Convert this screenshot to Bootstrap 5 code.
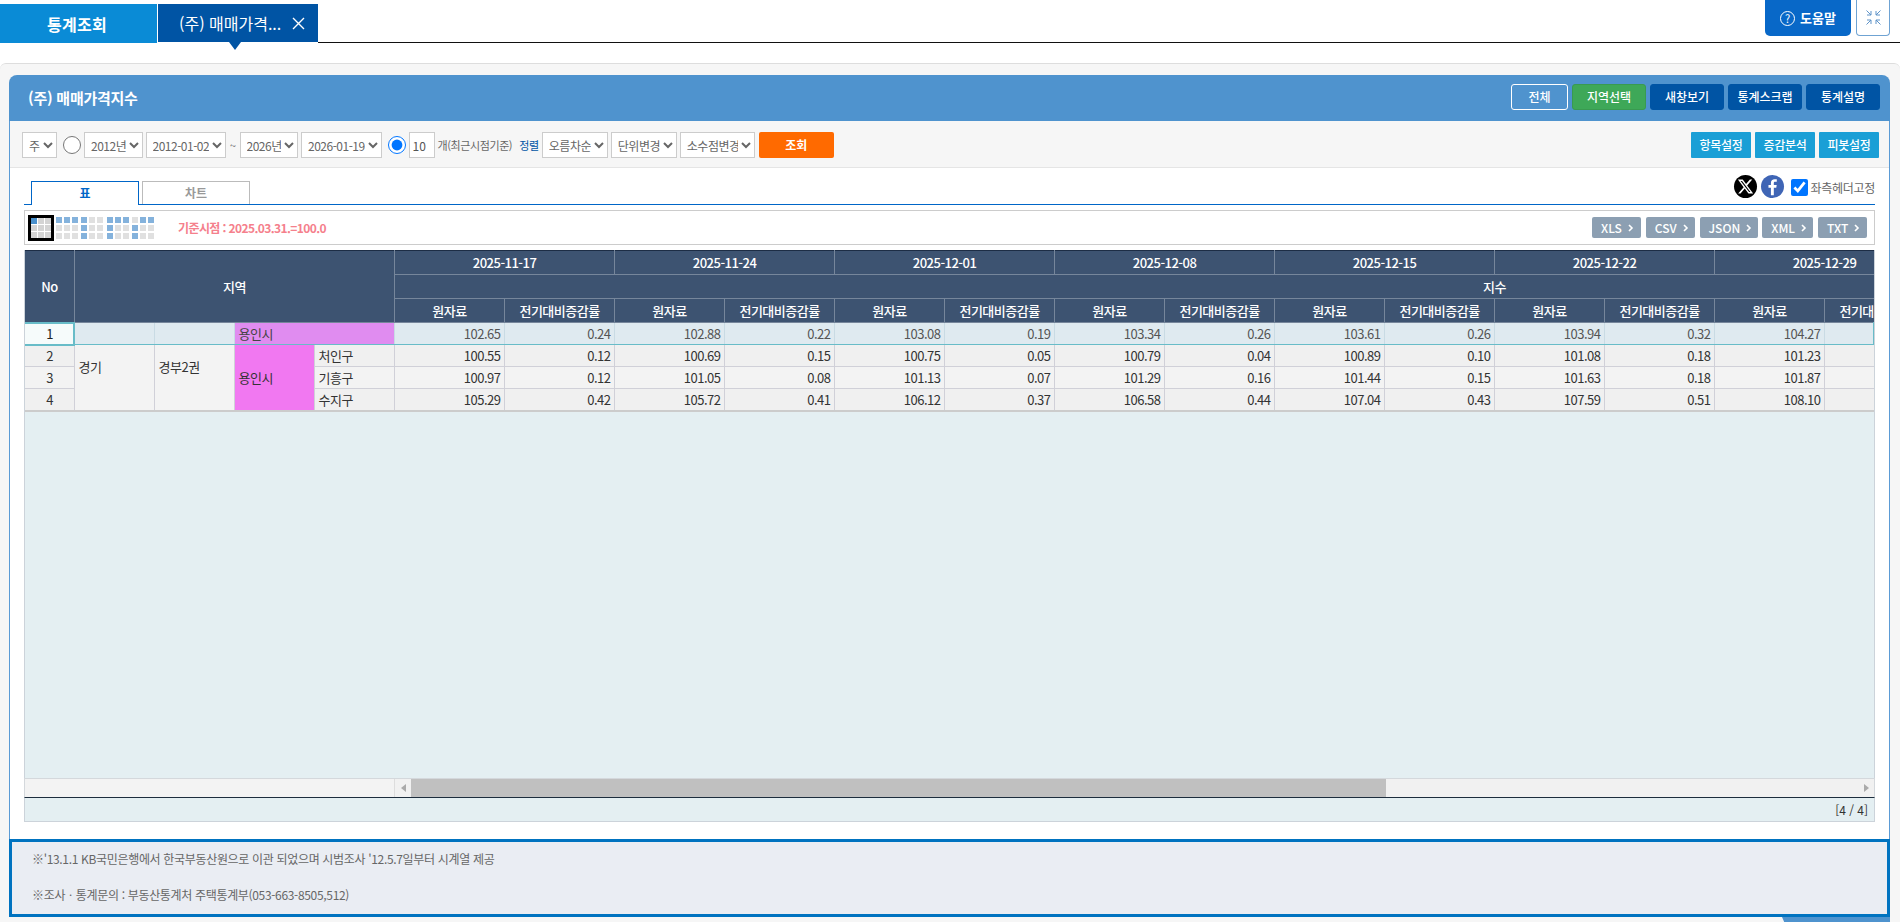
<!DOCTYPE html>
<html lang="ko">
<head>
<meta charset="utf-8">
<title>(주) 매매가격지수</title>
<link rel="stylesheet" href="https://cdn.jsdelivr.net/npm/bootstrap@5.3.0/dist/css/bootstrap.min.css">
<style>
html,body{height:922px;overflow:hidden;}
body{font-family:"Noto Sans CJK KR","Liberation Sans",sans-serif;font-size:12px;color:#333;background:#fff;}
.topwrap{height:63px;}
.tabmain{width:157px;height:39px;margin-top:4px;background:#0a8bd6;color:#fff;font-size:16px;font-weight:700;letter-spacing:.3px;padding-right:3px;}
.tabcur{width:160px;height:38px;margin-top:4px;margin-left:1px;background:#0054a4;color:#fff;font-size:16px;padding-left:21px;gap:11px;position:relative;}
.tabcur::after{content:"";position:absolute;left:71px;top:38px;border-style:solid;border-width:8px 6px 0;border-color:#0054a4 transparent transparent;}
.topline{height:43px;border-bottom:1px solid #111;}
.helpbtn{width:86px;height:36px;background:#0868c8;color:#fff;font-size:13px;font-weight:700;border-radius:0 0 5px 5px;gap:5px;}
.helpq{width:15px;height:15px;border:1px solid #fff;border-radius:50%;font-size:11px;font-weight:400;line-height:13px;text-align:center;}
.sizebtn{width:34px;height:36px;background:#fff;border:1px solid #6fa3d3;border-top:0;border-radius:0 0 4px 4px;margin:0 10px 0 5px;}
.mainwrap{height:859px;background:#f6f6f6;border-top:1px solid #ddd;padding:11px 10px 0 9px;border-radius:6px 6px 0 0;overflow:hidden;}
.panelhead{height:46px;background:#4f93ce;border-radius:8px 8px 0 0;color:#fff;padding:9px 10px 0 19px;}
.paneltitle{font-size:15px;font-weight:700;line-height:1;padding-top:6px;letter-spacing:-.25px;}
.hbtn{height:26px;padding:0;font-size:12px;font-weight:500;line-height:24px;color:#fff;border-radius:3px;border:1px solid #0054a4;background:#0054a4;}
.hbtn:hover{color:#fff;}
.hw-all{width:57px;background:transparent;border-color:#fff;}
.hw-area{width:74px;background:#3ea858;border-color:#399a50;}
.hw-def{width:74px;}
.panelbody{background:#fff;border-left:1px solid #5b9bd5;border-right:1px solid #5b9bd5;}
.toolbar{height:47px;background:#f6f6f6;border-bottom:1px solid #e5e5e5;padding:11px 10px 0 12px;}
.toolrow{gap:3px;height:26px;}
.sel{height:26px;border:1px solid #ccc;background:#fff;color:#666;font-size:12px;letter-spacing:-.5px;font-family:inherit;padding:0 0 0 2px;border-radius:0;}
.w-a{width:35px}.w-b{width:58.5px}.w-c{width:80.5px}.w-d{width:66px}.w-e{width:75px}
.rad{width:18px;height:18px;margin:0 0 0 3px;}
.numbox{width:26px;height:26px;border:1px solid #ccc;background:#fff;color:#555;font-size:12px;padding:0 3px;font-family:inherit;}
.gray11{font-size:11px;color:#666;letter-spacing:-.4px;}
.tilde{width:7.5px;text-align:center;}
.sortlab{color:#0054a4;font-size:11px;letter-spacing:-.3px;margin-left:4px;}
.gobtn{width:75px;height:26px;padding:0;margin-left:1px;background:#ff6a00;border:0;border-radius:2px;color:#fff;font-size:12px;font-weight:700;}
.tbtn{width:60px;height:26px;padding:0;background:#1a9fd6;border:0;border-radius:1px;color:#fff;font-size:12px;font-weight:500;letter-spacing:-.3px;}
.tbtn:hover{color:#fff;}
.tabarea{padding:0 14px;}
.tabbar{height:37px;padding-top:7px;border-bottom:1px solid #0066c8;}
.vtab{width:108px;height:23px;text-align:center;line-height:21px;font-size:12px;font-weight:700;border:1px solid #bbb;border-bottom:0;color:#999;background:#fff;margin-left:3px;}
.vtab-on{color:#0066c8;border-color:#0066c8;margin-left:7px;margin-bottom:-1px;height:24px;}
.roundico{width:23px;height:23px;border-radius:50%;}
.fbico{background:#3f65b5;}
.chk{width:17px;height:17px;margin:4px 3px 0 7px;}
.chklab{font-size:12px;line-height:17px;margin-top:4px;color:#666;letter-spacing:-.3px;}
.toolbox{height:35px;margin-top:5px;background:#fff;border:1px solid #ccc;padding:0 7px 0 3px;}
.gridico{display:grid;grid-template-columns:repeat(3,6px);grid-auto-rows:6px;gap:2px;}
.gridico-on{box-sizing:border-box;border:3px solid #000;width:26px;height:26px;gap:1px;}
.gridico i{display:block;background:#e0e0e0;}
.gridico i.o{background:#84b2dc;}
.gridico-on i{background:#d4d4d4;}
.gridico-on i.o{background:#4a90cc;}
.ml-2px{margin-left:2px}.ml-3px{margin-left:3px}.ml-4px{margin-left:4px}
.basetxt{color:#f5808c;font-weight:700;font-size:12px;margin-left:24px;letter-spacing:-.6px;}
.xbtn{height:21px;padding:0 0 0 9px;background:#8c9fb2;border:0;border-radius:2px;color:#fff;font-size:12px;font-weight:500;line-height:21px;margin-left:4.75px;gap:6px;}
.xbtn:hover{color:#fff;}
.xw-a{width:49px}.xw-b{width:58px}.xw-c{width:51px}
.gridbox{margin-top:5px;height:528px;background:#e4eff2;position:relative;border-left:1px solid #ccd3da;border-right:1px solid #ccd3da;overflow:hidden;}
.gridbox::after{content:"";position:absolute;right:0;top:72px;width:1px;height:23px;background:#68bcc8;}
.gtable.table{width:2570px;table-layout:fixed;border-collapse:collapse;margin:0 0 0 -2px;font-size:13px;letter-spacing:-.5px;line-height:1;}
.gtable.table>:not(caption)>*>*{padding:0 3px 0 4px;height:22px;vertical-align:middle;border:1px solid #d0d0d8;background-color:#f0f0f0;color:#333;box-shadow:none;}
.gtable.table>thead>tr>th{height:24px;background-color:#3d5371;color:#fff;border:1px solid #76869b;text-align:center;font-weight:500;}
.gtable.table>thead>tr:first-child>th{border-top:1px solid #1d2d45;}
.gtable.table>tbody>tr>td.num{text-align:right;}
.gtable.table>tbody>tr>td.ctr{text-align:center;}
.gtable.table>tbody>tr.lite>td{background-color:#f3f3f3;}
.gtable.table>tbody>tr>td.reg{background-color:#f3f3f3;padding-bottom:21px;}
.gtable.table>tbody>tr>td.pk{background-color:#f178f1;}
.gtable.table>tbody>tr.cur>td{background-color:#dfeaf0;color:#555;border-top:1px solid #68bcc8;border-bottom:1px solid #68bcc8;border-left-color:#c9dbe4;border-right-color:#c9dbe4;}
.gtable.table>tbody>tr.cur>td.pk2{background-color:#e08cf0;color:#444;}
.gtable.table>tbody>tr.cur>td.sel1{background-color:#f6fbfb;color:#222;border:2px solid #68bcc8;}
.gtable.table>tbody>tr.last>td{border-bottom:2px solid #ccc;}
.gtable.table>tbody>tr>td.lastr{border-bottom:2px solid #ccc;}
.scrollrow{height:19px;background:#f1f1f1;border:1px solid #d4d8dc;border-width:1px 1px 0;}
.scrolleft{width:370px;background:#f3f3f3;border-right:1px solid #ddd;}
.arrowb{width:16px;}
.thumb{width:975px;height:18px;background:#c0c0c0;}
.statusrow{height:25px;background:#e4eff2;border:1px solid #ccd3da;border-top:1px solid #1d2d3d;padding-right:6px;font-size:12px;color:#333;}
.noticebox{height:78px;margin:17px -1px 0;background:#eaedf3;border:3px solid #0073c0;padding:8px 20px;font-size:12px;color:#666;line-height:18px;letter-spacing:-.33px;}
.noticebox p{margin:0 0 18px;}
.tailbox{margin:0 -1px;background:#f6f6f6;}
.tailpiece{width:108px;height:5px;background:#4f93ce;clip-path:polygon(0 0,100% 0,100% 100%,2% 100%);}
</style>
</head>
<body>
<div class="topwrap d-flex">
  <div class="tabmain d-flex align-items-center justify-content-center">통계조회</div>
  <div class="tabcur d-flex align-items-center"><span>(주) 매매가격...</span>
    <svg width="13" height="13" viewBox="0 0 13 13" fill="none" stroke="#fff" stroke-width="1.4"><path d="M1 1l11 11M12 1L1 12"/></svg>
  </div>
  <div class="topline flex-grow-1"></div>
  <div class="d-flex position-absolute top-0 end-0">
    <div class="helpbtn d-flex align-items-center justify-content-center"><span class="helpq">?</span><span>도움말</span></div>
    <div class="sizebtn d-flex align-items-center justify-content-center">
      <svg width="15" height="15" viewBox="0 0 15 15" fill="none" stroke="#5f93c8" stroke-width="1"><path d="M.5 .5l4.500 4.500M5 1v4H1M14.500 .5L10 5M10 1v4h4M.5 14.500L5 10M1 10h4v4M14.500 14.500L10 10M14 10h-4v4"/></svg>
    </div>
  </div>
</div>
<div class="mainwrap">
  <div class="panelhead d-flex justify-content-between">
    <div class="paneltitle">(주) 매매가격지수</div>
    <div class="d-flex gap-1">
      <button class="btn hbtn hw-all">전체</button>
      <button class="btn hbtn hw-area">지역선택</button>
      <button class="btn hbtn hw-def">새창보기</button>
      <button class="btn hbtn hw-def">통계스크랩</button>
      <button class="btn hbtn hw-def">통계설명</button>
    </div>
  </div>
  <div class="panelbody">
    <div class="toolbar d-flex">
      <div class="toolrow d-flex align-items-center flex-grow-1">
        <select class="sel w-a"><option>주</option></select>
        <input class="rad" type="radio" name="rng" aria-label="기간">
        <select class="sel w-b"><option>2012년</option></select>
        <select class="sel w-c"><option>2012-01-02</option></select>
        <span class="gray11 tilde">~</span>
        <select class="sel w-b"><option>2026년</option></select>
        <select class="sel w-c"><option>2026-01-19</option></select>
        <input class="rad" type="radio" name="rng" checked aria-label="최근시점">
        <input class="numbox" value="10" aria-label="개수">
        <span class="gray11">개(최근시점기준)</span>
        <span class="sortlab">정렬</span>
        <select class="sel w-d"><option>오름차순</option></select>
        <select class="sel w-d"><option>단위변경</option></select>
        <select class="sel w-e"><option>소수점변경</option></select>
        <button class="btn gobtn">조회</button>
      </div>
      <div class="d-flex align-items-start gap-1">
        <button class="btn tbtn">항목설정</button>
        <button class="btn tbtn">증감분석</button>
        <button class="btn tbtn">피봇설정</button>
      </div>
    </div>
    <div class="tabarea">
      <div class="tabbar d-flex justify-content-between">
        <div class="d-flex align-items-end">
          <div class="vtab vtab-on">표</div>
          <div class="vtab">차트</div>
        </div>
        <div class="d-flex align-items-start">
          <div class="roundico bg-black d-flex align-items-center justify-content-center me-1">
            <svg width="17" height="17" viewBox="0 0 24 24" fill="#fff"><path d="M18.244 2.25h3.308l-7.227 8.26 8.502 11.24H16.17l-5.214-6.817L4.99 21.75H1.68l7.73-8.835L1.254 2.25H8.08l4.713 6.231zm-1.161 17.52h1.833L7.084 4.126H5.117z"/></svg>
          </div>
          <div class="roundico fbico d-flex align-items-center justify-content-center">
            <svg width="21" height="21" viewBox="0 0 24 24" fill="#fff"><path d="M13.5 22v-8.5h2.8l.5-3.3h-3.3V8.300c0-1 .3-1.600 1.700-1.600h1.700V3.800c-.4 0-1.400-.1-2.500-.1-2.500 0-4.200 1.500-4.200 4.200v2.300H7.400v3.300h2.800V22z"/></svg>
          </div>
          <input class="chk" type="checkbox" checked aria-label="좌측헤더고정">
          <span class="chklab">좌측헤더고정</span>
        </div>
      </div>
      <div class="toolbox d-flex align-items-center justify-content-between">
        <div class="d-flex align-items-center">
          <div class="gridico gridico-on"><i class="o"></i><i></i><i></i><i></i><i></i><i></i><i></i><i></i><i></i></div>
          <div class="gridico ml-2px"><i class="o"></i><i class="o"></i><i class="o"></i><i></i><i></i><i></i><i></i><i></i><i></i></div>
          <div class="gridico ml-3px"><i class="o"></i><i></i><i></i><i class="o"></i><i></i><i></i><i class="o"></i><i></i><i></i></div>
          <div class="gridico ml-4px"><i class="o"></i><i class="o"></i><i class="o"></i><i class="o"></i><i></i><i></i><i class="o"></i><i></i><i></i></div>
          <div class="gridico ml-3px"><i></i><i class="o"></i><i class="o"></i><i class="o"></i><i></i><i></i><i class="o"></i><i></i><i></i></div>
          <span class="basetxt">기준시점 : 2025.03.31.=100.0</span>
        </div>
        <div class="d-flex">
          <button class="btn xbtn xw-a d-flex align-items-center">XLS<svg width="6" height="8" viewBox="0 0 6 8" fill="none" stroke="#fff" stroke-width="1.600"><path d="M1 1l3 3-3 3"/></svg></button>
          <button class="btn xbtn xw-a d-flex align-items-center">CSV<svg width="6" height="8" viewBox="0 0 6 8" fill="none" stroke="#fff" stroke-width="1.600"><path d="M1 1l3 3-3 3"/></svg></button>
          <button class="btn xbtn xw-b d-flex align-items-center">JSON<svg width="6" height="8" viewBox="0 0 6 8" fill="none" stroke="#fff" stroke-width="1.600"><path d="M1 1l3 3-3 3"/></svg></button>
          <button class="btn xbtn xw-c d-flex align-items-center">XML<svg width="6" height="8" viewBox="0 0 6 8" fill="none" stroke="#fff" stroke-width="1.600"><path d="M1 1l3 3-3 3"/></svg></button>
          <button class="btn xbtn xw-a d-flex align-items-center">TXT<svg width="6" height="8" viewBox="0 0 6 8" fill="none" stroke="#fff" stroke-width="1.600"><path d="M1 1l3 3-3 3"/></svg></button>
        </div>
      </div>
      <div class="gridbox">
        <table class="table gtable">
          <colgroup>
            <col style="width:50px"><col style="width:80px"><col style="width:80px"><col style="width:80px"><col style="width:80px">
            <col style="width:110px"><col style="width:110px"><col style="width:110px"><col style="width:110px"><col style="width:110px"><col style="width:110px"><col style="width:110px"><col style="width:110px"><col style="width:110px"><col style="width:110px"><col style="width:110px"><col style="width:110px"><col style="width:110px"><col style="width:110px">
            <col style="width:660px">
          </colgroup>
          <thead>
            <tr>
              <th rowspan="3">No</th><th rowspan="3" colspan="4">지역</th>
              <th colspan="2">2025-11-17</th><th colspan="2">2025-11-24</th><th colspan="2">2025-12-01</th><th colspan="2">2025-12-08</th><th colspan="2">2025-12-15</th><th colspan="2">2025-12-22</th><th colspan="2">2025-12-29</th><th></th>
            </tr>
            <tr><th colspan="15">지수</th></tr>
            <tr>
              <th>원자료</th><th>전기대비증감률</th><th>원자료</th><th>전기대비증감률</th><th>원자료</th><th>전기대비증감률</th><th>원자료</th><th>전기대비증감률</th><th>원자료</th><th>전기대비증감률</th><th>원자료</th><th>전기대비증감률</th><th>원자료</th><th>전기대비증감률</th><th></th>
            </tr>
          </thead>
          <tbody>
            <tr class="cur">
              <td class="ctr sel1">1</td><td></td><td></td><td class="pk2" colspan="2">용인시</td>
              <td class="num">102.65</td><td class="num">0.24</td><td class="num">102.88</td><td class="num">0.22</td><td class="num">103.08</td><td class="num">0.19</td><td class="num">103.34</td><td class="num">0.26</td><td class="num">103.61</td><td class="num">0.26</td><td class="num">103.94</td><td class="num">0.32</td><td class="num">104.27</td><td></td><td></td>
            </tr>
            <tr>
              <td class="ctr">2</td><td class="reg lastr" rowspan="3">경기</td><td class="reg lastr" rowspan="3">경부2권</td><td class="pk lastr" rowspan="3">용인시</td><td>처인구</td>
              <td class="num">100.55</td><td class="num">0.12</td><td class="num">100.69</td><td class="num">0.15</td><td class="num">100.75</td><td class="num">0.05</td><td class="num">100.79</td><td class="num">0.04</td><td class="num">100.89</td><td class="num">0.10</td><td class="num">101.08</td><td class="num">0.18</td><td class="num">101.23</td><td></td><td></td>
            </tr>
            <tr class="lite">
              <td class="ctr">3</td><td>기흥구</td>
              <td class="num">100.97</td><td class="num">0.12</td><td class="num">101.05</td><td class="num">0.08</td><td class="num">101.13</td><td class="num">0.07</td><td class="num">101.29</td><td class="num">0.16</td><td class="num">101.44</td><td class="num">0.15</td><td class="num">101.63</td><td class="num">0.18</td><td class="num">101.87</td><td></td><td></td>
            </tr>
            <tr class="last">
              <td class="ctr">4</td><td>수지구</td>
              <td class="num">105.29</td><td class="num">0.42</td><td class="num">105.72</td><td class="num">0.41</td><td class="num">106.12</td><td class="num">0.37</td><td class="num">106.58</td><td class="num">0.44</td><td class="num">107.04</td><td class="num">0.43</td><td class="num">107.59</td><td class="num">0.51</td><td class="num">108.10</td><td></td><td></td>
            </tr>
          </tbody>
        </table>
      </div>
      <div class="scrollrow d-flex">
        <div class="scrolleft"></div>
        <div class="arrowb d-flex align-items-center justify-content-center"><svg width="5" height="8" viewBox="0 0 5 8" fill="#aaa"><path d="M5 0v8L0 4z"/></svg></div>
        <div class="thumb"></div>
        <div class="flex-grow-1"></div>
        <div class="arrowb d-flex align-items-center justify-content-center"><svg width="5" height="8" viewBox="0 0 5 8" fill="#aaa"><path d="M0 0v8l5-4z"/></svg></div>
      </div>
      <div class="statusrow d-flex align-items-center justify-content-end">[4 / 4]</div>
    </div>
    <div class="noticebox">
      <p>※'13.1.1 KB국민은행에서 한국부동산원으로 이관 되었으며 시범조사 '12.5.7일부터 시계열 제공</p>
      <p>※조사ㆍ통계문의 : 부동산통계처 주택통계부(053-663-8505,512)</p>
    </div>
    <div class="tailbox d-flex justify-content-end"><div class="tailpiece"></div></div>
  </div>
</div>
<script src="https://cdn.jsdelivr.net/npm/bootstrap@5.3.0/dist/js/bootstrap.bundle.min.js"></script>
</body>
</html>
